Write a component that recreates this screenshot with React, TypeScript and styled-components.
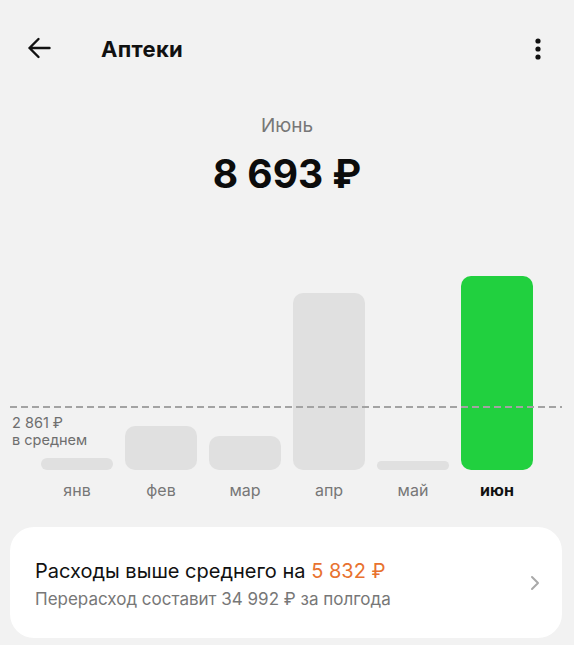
import * as React from 'react'
import styled, { createGlobalStyle } from 'styled-components'

const months = [
	{ label: 'янв', value: 12 },
	{ label: 'фев', value: 44 },
	{ label: 'мар', value: 34 },
	{ label: 'апр', value: 177 },
	{ label: 'май', value: 9 },
	{ label: 'июн', value: 194, current: true },
]

export default function App(): JSX.Element {
	return (
		<Page>
			<GlobalStyle />
			<Header>
				<IconButton aria-label="Назад">
					<svg width="24" height="22" viewBox="0 0 24 22" fill="none">
						<path d="M22.5 11H2.5M11.5 2L2.5 11l9 9" stroke="#111" strokeWidth="2.4" strokeLinecap="round" strokeLinejoin="round" />
					</svg>
				</IconButton>
				<Title>Аптеки</Title>
				<MenuButton aria-label="Меню">
					<svg width="6" height="22" viewBox="0 0 6 22">
						<circle cx="3" cy="3" r="2.6" fill="#111" />
						<circle cx="3" cy="11" r="2.6" fill="#111" />
						<circle cx="3" cy="19" r="2.6" fill="#111" />
					</svg>
				</MenuButton>
			</Header>

			<Summary>
				<Month>Июнь</Month>
				<Amount>8 693 ₽</Amount>
			</Summary>

			<Chart>
				<Bars>
					{months.map((m) => (
						<Bar key={m.label} $current={m.current} style={{ height: m.value }} />
					))}
				</Bars>
				<AverageLine />
				<AverageLabel>
					2 861 ₽
					<br />
					в среднем
				</AverageLabel>
				<Labels>
					{months.map((m) => (
						<MonthLabel key={m.label} $current={m.current}>
							{m.label}
						</MonthLabel>
					))}
				</Labels>
			</Chart>

			<Card>
				<CardText>
					<CardTitle>
						Расходы выше среднего на <Accent>5 832 ₽</Accent>
					</CardTitle>
					<CardSubtitle>Перерасход составит 34 992 ₽ за полгода</CardSubtitle>
				</CardText>
				<svg width="10" height="16" viewBox="0 0 10 16" fill="none">
					<path d="M2 2l6 6-6 6" stroke="#a9a9a9" strokeWidth="2" strokeLinecap="round" strokeLinejoin="round" />
				</svg>
			</Card>
		</Page>
	)
}

const GlobalStyle = createGlobalStyle`
	html, body {
		margin: 0;
		padding: 0;
		background: #f2f2f2;
	}
	body {
		font-family: Inter, Roboto, "Noto Sans", "Liberation Sans", sans-serif;
		color: #111;
	}
`
const Page = styled.div`
	width: 574px;
	height: 645px;
	display: flex;
	flex-direction: column;
	background: #f2f2f2;
	overflow: hidden;
`
const Header = styled.div`
	height: 96px;
	display: flex;
	align-items: center;
	padding: 0 33px 0 27px;
`
const IconButton = styled.div`
	display: flex;
	align-items: center;
`
const MenuButton = styled.div`
	display: flex;
	align-items: center;
	margin-left: auto;
	padding-top: 2px;
`
const Title = styled.h1`
	margin: 0 0 0 50px;
	font-size: 22px;
	font-weight: 700;
	letter-spacing: 0.3px;
	line-height: 26px;
	padding-top: 2px;
`
const Summary = styled.div`
	display: flex;
	flex-direction: column;
	align-items: center;
	margin-top: 18px;
`
const Month = styled.div`
	font-size: 19px;
	line-height: 24px;
	color: #777;
`
const Amount = styled.div`
	margin-top: 13px;
	font-size: 39px;
	line-height: 46px;
	font-weight: 700;
	color: #0c0c0c;
`
const Chart = styled.div`
	position: relative;
	padding-left: 41px;
`
const Bars = styled.div`
	height: 273px;
	display: flex;
	align-items: flex-end;
	gap: 12px;
`
const Bar = styled.div<{ $current?: boolean }>`
	width: 72px;
	border-radius: 10px;
	background: ${(p) => (p.$current ? '#21d03f' : '#e0e0e0')};
`
const AverageLine = styled.div`
	position: absolute;
	left: 10px;
	right: 12px;
	top: 209px;
	height: 1.5px;
	background: repeating-linear-gradient(to right, #a3a3a3 0 7px, transparent 7px 11px);
`
const AverageLabel = styled.div`
	position: absolute;
	left: 12px;
	top: 217px;
	font-size: 14.5px;
	line-height: 17px;
	color: #6e6e6e;
`
const Labels = styled.div`
	display: flex;
	gap: 12px;
	margin-top: 10px;
`
const MonthLabel = styled.div<{ $current?: boolean }>`
	width: 72px;
	text-align: center;
	font-size: 16px;
	line-height: 20px;
	font-weight: ${(p) => (p.$current ? 700 : 400)};
	color: ${(p) => (p.$current ? '#111' : '#777')};
`
const Card = styled.div`
	margin: 27px 12px 0 10px;
	height: 111px;
	display: flex;
	align-items: center;
	padding: 0 22px 0 25px;
	background: #fff;
	border-radius: 24px;
	box-sizing: border-box;
`
const CardText = styled.div`
	flex: 1;
	display: flex;
	flex-direction: column;
	gap: 4px;
	padding-top: 2px;
`
const CardTitle = styled.div`
	font-size: 20px;
	line-height: 26px;
	color: #111;
`
const Accent = styled.span`
	color: #e8722f;
`
const CardSubtitle = styled.div`
	font-size: 17px;
	line-height: 22px;
	color: #777;
`
